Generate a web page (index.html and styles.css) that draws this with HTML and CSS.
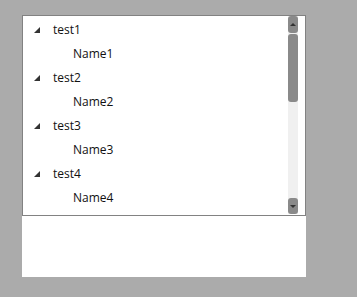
FILE: index.html
```html
<!DOCTYPE html>
<html lang="en">
<head>
    <meta charset="UTF-8">
    <meta name="viewport" content="width=device-width, initial-scale=1.0">
    <title>Tree View</title>
    <link rel="stylesheet" href="styles.css">
</head>
<body>
    <div class="panel">
        <div class="tree">
            <ul class="items">
                <li class="node">
                    <div class="row"><span class="arrow"></span>test1</div>
                    <div class="row child">Name1</div>
                </li>
                <li class="node">
                    <div class="row"><span class="arrow"></span>test2</div>
                    <div class="row child">Name2</div>
                </li>
                <li class="node">
                    <div class="row"><span class="arrow"></span>test3</div>
                    <div class="row child">Name3</div>
                </li>
                <li class="node">
                    <div class="row"><span class="arrow"></span>test4</div>
                    <div class="row child">Name4</div>
                </li>
            </ul>
            <div class="scrollbar">
                <div class="btn up"><span class="tri"></span></div>
                <div class="track">
                    <div class="thumb"></div>
                </div>
                <div class="btn down"><span class="tri"></span></div>
            </div>
        </div>
        <div class="blank"></div>
    </div>
</body>
</html>
```
FILE: styles.css
```css
body {
    margin: 0;
    background-color: #ababab;
    font-family: "Open Sans", "Noto Sans", sans-serif;
    font-size: 12px;
    color: #111;
}
.panel {
    margin: 15px 0 0 22px;
    width: 284px;
    background: white;
}
.tree {
    display: flex;
    height: 199px;
    border: 1px solid #828282;
}
.items {
    flex: 1;
    list-style: none;
    margin: 0;
    padding: 1px 0 0 0;
    overflow: hidden;
}
.row {
    display: flex;
    align-items: center;
    height: 24px;
    padding-left: 30px;
    position: relative;
}
.row.child {
    padding-left: 50px;
}
.arrow {
    position: absolute;
    left: 11px;
    top: 10px;
    width: 0;
    height: 0;
    border-left: 6px solid transparent;
    border-bottom: 6px solid #333;
}
.scrollbar {
    width: 10px;
    margin: 0 7px 1px 0;
    display: flex;
    flex-direction: column;
    background: #f0f0f0;
}
.btn {
    height: 17px;
    background: #8a8a8a;
    border-radius: 3px;
    display: flex;
    justify-content: center;
    align-items: center;
}
.btn.down {
    height: 16px;
}
.tri {
    width: 0;
    height: 0;
    border-left: 3px solid transparent;
    border-right: 3px solid transparent;
}
.up .tri {
    border-bottom: 3px solid #333;
}
.down .tri {
    border-top: 3px solid #333;
}
.track {
    flex: 1;
    padding-top: 1px;
}
.thumb {
    height: 68px;
    background: #8a8a8a;
    border-radius: 3px;
}
.blank {
    height: 61px;
}
```
